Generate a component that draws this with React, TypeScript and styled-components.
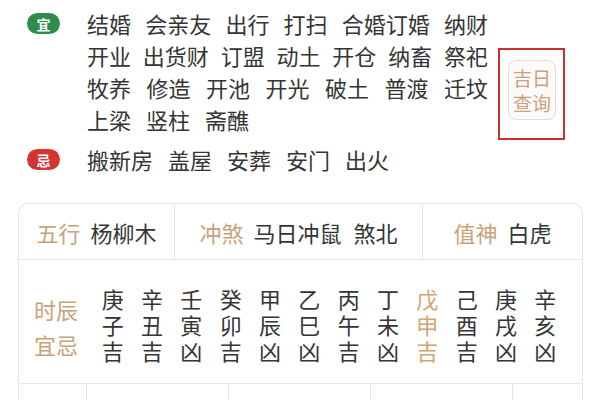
import React from 'react';
import styled, { createGlobalStyle } from 'styled-components';

const GlobalStyle = createGlobalStyle`
  html, body {
    margin: 0;
    padding: 0;
    background: #fff;
  }
  body {
    font-family: "Noto Sans CJK SC", "Noto Sans", sans-serif;
    color: #333;
  }
`;

const TAN = '#c9a27c';
const TEXT = '#353535';
const LINE = '#e6e6e6';

const yiLines = [
  ['结婚', '会亲友', '出行', '打扫', '合婚订婚', '纳财'],
  ['开业', '出货财', '订盟', '动土', '开仓', '纳畜', '祭祀'],
  ['牧养', '修造', '开池', '开光', '破土', '普渡', '迁坟'],
  ['上梁', '竖柱', '斋醮'],
];
const jiWords = ['搬新房', '盖屋', '安葬', '安门', '出火'];

const hours = [
  ['庚', '子', '吉'], ['辛', '丑', '吉'], ['壬', '寅', '凶'], ['癸', '卯', '吉'],
  ['甲', '辰', '凶'], ['乙', '巳', '凶'], ['丙', '午', '吉'], ['丁', '未', '凶'],
  ['戊', '申', '吉'], ['己', '酉', '吉'], ['庚', '戌', '凶'], ['辛', '亥', '凶'],
];
const currentHour = 8;

function App() {
  return (
    <Page>
      <GlobalStyle />
      <YiSection>
        <Badge $bg="#2f8c4c">宜</Badge>
        <Lines>
          {yiLines.map((words, i) => (
            <Line key={i} $fill={i < yiLines.length - 1}>
              {words.map((w) => <span key={w}>{w}</span>)}
            </Line>
          ))}
        </Lines>
        <Highlight>
          <QueryButton>吉日<br />查询</QueryButton>
        </Highlight>
      </YiSection>

      <JiRow>
        <Badge $bg="#d2362e">忌</Badge>
        <Line $fill={false}>
          {jiWords.map((w) => <span key={w}>{w}</span>)}
        </Line>
      </JiRow>

      <Table>
        <InfoRow>
          <InfoCell><Label>五行</Label><Value>杨柳木</Value></InfoCell>
          <InfoCell><Label>冲煞</Label><Value>马日冲鼠</Value><Value>煞北</Value></InfoCell>
          <InfoCell $last><Label>值神</Label><Value>白虎</Value></InfoCell>
        </InfoRow>
        <HourRow>
          <HourLabel>时辰<br />宜忌</HourLabel>
          <HourGrid>
            {hours.map((h, i) => (
              <HourCol key={i} $active={i === currentHour}>
                {h.map((c, j) => <span key={j}>{c}</span>)}
              </HourCol>
            ))}
          </HourGrid>
        </HourRow>
        <BottomRow>
          <BottomCell />
          <BottomCell />
          <BottomCell />
          <BottomCell />
          <BottomCell $last />
        </BottomRow>
      </Table>
    </Page>
  );
}

export default App;

const Page = styled.div`
  width: 600px;
  height: 400px;
  overflow: hidden;
  padding-top: 7px;
  box-sizing: border-box;
`;

const YiSection = styled.div`
  display: flex;
  align-items: flex-start;
  padding-left: 27px;
`;

const Badge = styled.div<{ $bg: string }>`
  flex-shrink: 0;
  width: 33px;
  height: 21px;
  margin: 6px 27px 0 0;
  border-radius: 11px;
  background: ${(p) => p.$bg};
  color: #fff;
  font-size: 14px;
  font-weight: bold;
  display: flex;
  align-items: center;
  justify-content: center;
`;

const Lines = styled.div`
  display: flex;
  flex-direction: column;
  width: 401px;
`;

const Line = styled.div<{ $fill: boolean }>`
  display: flex;
  justify-content: ${(p) => (p.$fill ? 'space-between' : 'flex-start')};
  gap: ${(p) => (p.$fill ? '6px' : '15px')};
  height: 32px;
  line-height: 32px;
  font-size: 22px;
  color: ${TEXT};
  white-space: nowrap;
`;

const Highlight = styled.div`
  margin: 41px 0 0 10px;
  box-sizing: border-box;
  height: 92px;
  border: 2px solid #c8302b;
  padding: 0 7px 8px 8px;
  display: flex;
  justify-content: center;
  align-items: center;
`;

const QueryButton = styled.div`
  border: 1.5px solid #e3ddd6;
  border-radius: 8px;
  background: #fbfaf8;
  color: ${TAN};
  font-size: 19px;
  line-height: 25px;
  padding: 4px 4px;
  text-align: center;
`;

const JiRow = styled.div`
  display: flex;
  align-items: flex-start;
  padding-left: 27px;
  margin-top: 3px;
`;

const Table = styled.div`
  margin: 28px 0 0 18px;
  width: 565px;
  box-sizing: border-box;
  border: 1.5px solid ${LINE};
  border-bottom: none;
  border-radius: 10px 10px 0 0;
`;

const InfoRow = styled.div`
  display: grid;
  grid-template-columns: 156px 248px 1fr;
  height: 55px;
  border-bottom: 1.5px solid ${LINE};
`;

const InfoCell = styled.div<{ $last?: boolean }>`
  display: flex;
  align-items: center;
  justify-content: center;
  gap: 12px;
  font-size: 22px;
  border-right: ${(p) => (p.$last ? 'none' : `1.5px solid ${LINE}`)};
`;

const Label = styled.span`
  color: ${TAN};
  margin-right: -2px;
`;

const Value = styled.span`
  color: ${TEXT};
`;

const HourRow = styled.div`
  display: flex;
  height: 124px;
  box-sizing: border-box;
  padding-top: 4px;
  border-bottom: 1.5px solid ${LINE};
`;

const HourLabel = styled.div`
  width: 74px;
  display: flex;
  align-items: center;
  justify-content: center;
  text-align: center;
  color: ${TAN};
  font-size: 22px;
  line-height: 35px;
  padding-top: 6px;
`;

const HourGrid = styled.div`
  width: 472px;
  display: grid;
  grid-template-columns: repeat(12, 1fr);
  align-items: center;
`;

const HourCol = styled.div<{ $active: boolean }>`
  display: flex;
  flex-direction: column;
  align-items: center;
  font-size: 22px;
  line-height: 26px;
  color: ${(p) => (p.$active ? '#d4a46f' : TEXT)};
`;

const BottomRow = styled.div`
  display: grid;
  grid-template-columns: 68px 142px 142px 142px 1fr;
  height: 50px;
`;

const BottomCell = styled.div<{ $last?: boolean }>`
  border-right: ${(p) => (p.$last ? 'none' : `1.5px solid ${LINE}`)};
`;
